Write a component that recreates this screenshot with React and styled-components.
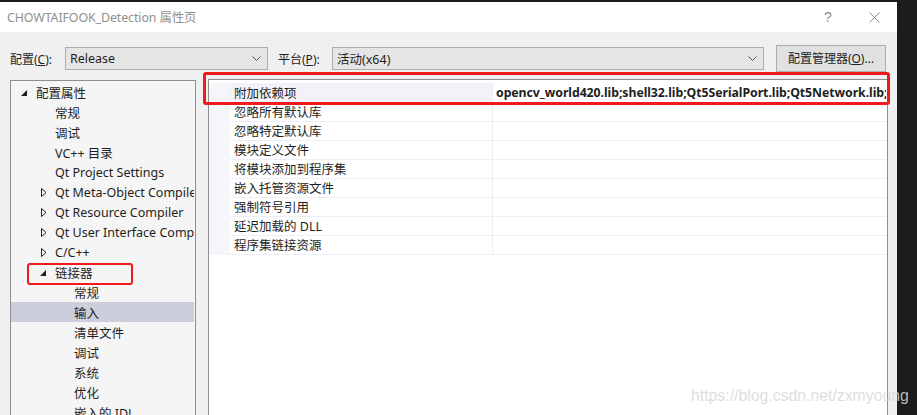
import React from "react";
import styled, { createGlobalStyle } from "styled-components";

const Global = createGlobalStyle`
  html, body { margin: 0; padding: 0; background: #1c1c1c; overflow: hidden; }
  body { font-family: "Noto Sans", "Noto Sans CJK SC", sans-serif; font-size: 12px; color: #1e1e1e; }
  #root { width: 917px; height: 415px; }
`;

const Desktop = styled.div`
  position: relative;
  width: 917px;
  height: 415px;
  box-sizing: border-box;
  padding: 2px 20px 0 0;
  background: #1c1c1c;
  overflow: hidden;
`;

const Window = styled.div`
  width: 897px;
  height: 413px;
  background: #f0f0f0;
  display: flex;
  flex-direction: column;
`;

const TitleBar = styled.div`
  height: 30px;
  flex: none;
  background: #ffffff;
  display: flex;
  align-items: center;
  padding-left: 7px;
`;

const Title = styled.div`
  flex: 1;
  color: #8f8f8f;
  font-size: 12.4px;
  font-family: "Noto Sans", "Noto Sans CJK SC", sans-serif;
  letter-spacing: -0.1px;
`;

const TitleBtn = styled.div`
  width: 46px;
  height: 30px;
  display: flex;
  align-items: center;
  justify-content: center;
  color: #8a8a8a;
  font-size: 14px;
  font-family: "Liberation Sans", sans-serif;
`;

const Toolbar = styled.div`
  height: 40px;
  flex: none;
  display: flex;
  align-items: flex-start;
  padding: 13px 0 0 10px;
  box-sizing: border-box;
`;

const Label = styled.div`
  height: 24px;
  display: flex;
  align-items: center;
  width: ${(p) => p.$w}px;
  margin-left: ${(p) => p.$ml || 0}px;
  flex: none;
  white-space: nowrap;
  margin-top: 2px;
`;

const Combo = styled.div`
  width: ${(p) => p.$w}px;
  height: 23px;
  box-sizing: border-box;
  margin-top: 2px;
  border: 1px solid #adadad;
  background: #e5e5e5;
  display: flex;
  align-items: center;
  padding: 0 6px 0 4px;
  flex: none;
`;

const ComboText = styled.div`
  flex: 1;
  font-size: 12.5px;
`;

const Button = styled.div`
  margin-left: 12px;
  width: 110px;
  height: 27px;
  box-sizing: border-box;
  border: 1px solid #adadad;
  background: #e1e1e1;
  display: flex;
  align-items: center;
  justify-content: center;
  flex: none;
  padding-bottom: 1px;
`;

const Content = styled.div`
  flex: 1;
  display: flex;
  align-items: stretch;
  padding-left: 10px;
  min-height: 0;
`;

const TreePanel = styled.div`
  width: 186px;
  margin-top: 8px;
  box-sizing: border-box;
  border: 1px solid #8e8f8f;
  border-bottom: none;
  background: #f5f5f5;
  padding-top: 1px;
  overflow: hidden;
  flex: none;
`;

const TreeRow = styled.div`
  height: 20px;
  display: flex;
  align-items: center;
  padding-left: ${(p) => p.$level * 19 + 8}px;
  margin-right: 1px;
  background: ${(p) => (p.$selected ? "#cccedb" : "transparent")};
  white-space: nowrap;
  overflow: hidden;
`;

const ArrowSlot = styled.div`
  width: 17px;
  height: 20px;
  flex: none;
  position: relative;
`;

const TreeText = styled.span`
  font-size: 12.5px;
`;

const Splitter = styled.div`
  width: 12px;
  flex: none;
`;

const GridPanel = styled.div`
  width: 680px;
  margin-top: 7px;
  box-sizing: border-box;
  border: 1px solid #8e8f8f;
  border-bottom: none;
  background: #ffffff;
  padding-top: 3px;
  flex: none;
  overflow: hidden;
`;

const GridRow = styled.div`
  display: grid;
  grid-template-columns: 21px 263px 1fr;
  height: 19px;
  background: ${(p) => (p.$active ? "#f1f3f8" : "#ffffff")};
`;

const Gutter = styled.div`
  background: #f4f6fa;
  border-bottom: 1px solid #f4f6fa;
`;

const NameCell = styled.div`
  display: flex;
  align-items: center;
  padding-left: 4px;
  border-bottom: 1px solid #eceef3;
  border-right: 1px solid #eceef3;
  white-space: nowrap;
  font-size: 12.5px;
  box-sizing: border-box;
`;

const ValueCell = styled.div`
  display: flex;
  align-items: center;
  padding-left: 3px;
  background: ${(p) => (p.$filled ? "#ffffff" : "transparent")};
  border-bottom: 1px solid #eceef3;
  white-space: nowrap;
  overflow: hidden;
  font-weight: 700;
  font-size: 12.3px;
  letter-spacing: -0.06px;
  margin-right: 1px;
  box-sizing: border-box;
`;

const RedBox = styled.div`
  position: absolute;
  left: ${(p) => p.$x}px;
  top: ${(p) => p.$y}px;
  width: ${(p) => p.$w}px;
  height: ${(p) => p.$h}px;
  box-sizing: border-box;
  border: ${(p) => p.$t}px solid #f2181b;
  border-radius: 3px;
  pointer-events: none;
`;

const Watermark = styled.div`
  position: absolute;
  left: 691px;
  top: 387px;
  font-family: "Liberation Sans", Arial, sans-serif;
  font-size: 15.8px;
  color: rgba(215, 215, 215, 0.85);
  white-space: nowrap;
  pointer-events: none;
`;

const Chevron = () => (
  <svg width="9" height="5" viewBox="0 0 9 5">
    <path d="M0.5 0.5 L4.5 4.5 L8.5 0.5" fill="none" stroke="#555" strokeWidth="1" />
  </svg>
);

const CloseIcon = () => (
  <svg width="11" height="11" viewBox="0 0 11 11">
    <path d="M0.5 0.5 L10.5 10.5 M10.5 0.5 L0.5 10.5" stroke="#8a8a8a" strokeWidth="1" />
  </svg>
);

const ExpandedIcon = styled.svg`
  position: absolute;
  left: 2px;
  top: 8px;
`;

const CollapsedIcon = styled.svg`
  position: absolute;
  left: 3px;
  top: 6px;
`;

const Arrow = ({ kind }) => {
  if (kind === "open")
    return (
      <ExpandedIcon width="6" height="6" viewBox="0 0 6 6">
        <path d="M6 0 L6 6 L0 6 Z" fill="#1e1e1e" />
      </ExpandedIcon>
    );
  if (kind === "closed")
    return (
      <CollapsedIcon width="6" height="9" viewBox="0 0 6 9">
        <path d="M0.5 0.5 L5 4.5 L0.5 8.5 Z" fill="none" stroke="#1e1e1e" strokeWidth="1" />
      </CollapsedIcon>
    );
  return null;
};

const tree = [
  { l: 0, a: "open", t: "配置属性" },
  { l: 1, t: "常规" },
  { l: 1, t: "调试" },
  { l: 1, t: "VC++ 目录" },
  { l: 1, t: "Qt Project Settings" },
  { l: 1, a: "closed", t: "Qt Meta-Object Compiler" },
  { l: 1, a: "closed", t: "Qt Resource Compiler" },
  { l: 1, a: "closed", t: "Qt User Interface Compiler" },
  { l: 1, a: "closed", t: "C/C++" },
  { l: 1, a: "open", t: "链接器" },
  { l: 2, t: "常规" },
  { l: 2, t: "输入", s: true },
  { l: 2, t: "清单文件" },
  { l: 2, t: "调试" },
  { l: 2, t: "系统" },
  { l: 2, t: "优化" },
  { l: 2, t: "嵌入的 IDL" },
];

const props = [
  { n: "附加依赖项", v: "opencv_world420.lib;shell32.lib;Qt5SerialPort.lib;Qt5Network.lib;" },
  { n: "忽略所有默认库" },
  { n: "忽略特定默认库" },
  { n: "模块定义文件" },
  { n: "将模块添加到程序集" },
  { n: "嵌入托管资源文件" },
  { n: "强制符号引用" },
  { n: "延迟加载的 DLL" },
  { n: "程序集链接资源" },
];

export default function App() {
  return (
    <>
      <Global />
      <Desktop>
        <Window>
          <TitleBar>
            <Title>CHOWTAIFOOK_Detection 属性页</Title>
            <TitleBtn>?</TitleBtn>
            <TitleBtn>
              <CloseIcon />
            </TitleBtn>
          </TitleBar>
          <Toolbar>
            <Label $w={55}>
              配置(<u>C</u>):
            </Label>
            <Combo $w={203}>
              <ComboText>Release</ComboText>
              <Chevron />
            </Combo>
            <Label $w={54} $ml={10}>
              平台(<u>P</u>):
            </Label>
            <Combo $w={432}>
              <ComboText>活动(x64)</ComboText>
              <Chevron />
            </Combo>
            <Button>
              配置管理器(<u>O</u>)...
            </Button>
          </Toolbar>
          <Content>
            <TreePanel>
              {tree.map((r, i) => (
                <TreeRow key={i} $level={r.l} $selected={r.s}>
                  <ArrowSlot>
                    <Arrow kind={r.a} />
                  </ArrowSlot>
                  <TreeText>{r.t}</TreeText>
                </TreeRow>
              ))}
            </TreePanel>
            <Splitter />
            <GridPanel>
              {props.map((p, i) => (
                <GridRow key={i} $active={i === 0}>
                  <Gutter />
                  <NameCell>{p.n}</NameCell>
                  <ValueCell $filled={i === 0}>{p.v || ""}</ValueCell>
                </GridRow>
              ))}
            </GridPanel>
          </Content>
        </Window>
        <RedBox $x={203} $y={72} $w={687} $h={33} $t={3} />
        <RedBox $x={27} $y={263} $w={106} $h={22} $t={2} />
        <Watermark>https://blog.csdn.net/zxmyoung</Watermark>
      </Desktop>
    </>
  );
}
